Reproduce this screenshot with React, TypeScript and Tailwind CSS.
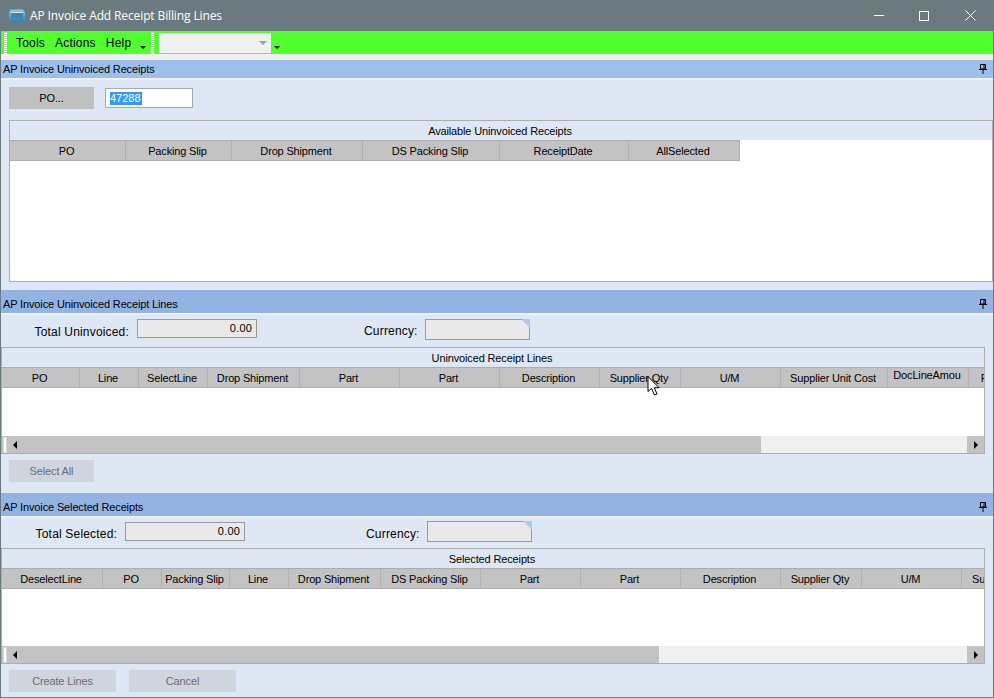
const FONT = "font-['Liberation_Sans',Arial,sans-serif]";

function Pin() {
  return (
    <svg width="8" height="10" viewBox="0 0 8 10" className="block">
      <path d="M1.5 0.5H6.5V5H1.5Z" fill="none" stroke="#000" />
      <path d="M5 0.5V5M0 5.5H8M4 6V10" fill="none" stroke="#000" />
    </svg>
  );
}

function SectionHeader({ title, tall }: { title: string; tall?: boolean }) {
  return (
    <div className={`flex shrink-0 items-center justify-between pl-[2px] pr-[6px] text-[11px] tracking-[-0.14px] text-black ${tall ? "h-[23px] bg-[#93b4e2] pt-[5px]" : "h-[18px] bg-[#9dc0ea]"}`}>
      <span>{title}</span>
      <Pin />
    </div>
  );
}

function Grip() {
  return <div className="h-[22px] w-[3px] self-end bg-[repeating-linear-gradient(to_bottom,#c8c8c8_0,#c8c8c8_1px,#ffffff_1px,#ffffff_2px)]" />;
}

function Caret() {
  return <div className="mt-[9px] h-0 w-0 border-x-[3px] border-t-[3px] border-x-transparent border-t-black" />;
}

type Col = { label: string; width: number; raised?: boolean };

function HeaderRow({ cols }: { cols: Col[] }) {
  return (
    <div className="flex h-[21px] overflow-hidden border-y border-[#adadad] bg-[#c3c3c3]">
      {cols.map((c, i) => (
        <div
          key={i}
          style={{ width: c.width }}
          className={`flex shrink-0 justify-center whitespace-nowrap border-r border-[#b0b0b0] pr-[2px] text-[11px] tracking-[-0.16px] text-black ${c.raised ? "items-start pt-[1px] leading-[13px]" : "items-center pt-[2px]"}`}
        >
          {c.label}
        </div>
      ))}
    </div>
  );
}

function Caption({ label }: { label: string }) {
  return (
    <div className="flex h-[19px] shrink-0 items-center justify-center bg-[#dee8f4] pr-[2px] pt-[1px] text-[11px] tracking-[-0.14px]">
      {label}
    </div>
  );
}

function ScrollBar({ thumb }: { thumb: number }) {
  return (
    <div className="flex h-[18px] border-b border-[#adadad] bg-[#f0f0f0]">
      <div style={{ width: thumb }} className="flex items-center gap-[6px] bg-[#c3c3c3] pl-[1px]">
        <div className="h-[16px] w-[4px] border border-[#d8d8d8] bg-white" />
        <div className="h-0 w-0 border-y-[4px] border-r-[4px] border-y-transparent border-r-black" />
      </div>
      <div className="flex-1" />
      <div className="flex w-[17px] items-center justify-center bg-[#c3c3c3]">
        <div className="h-0 w-0 border-y-[4px] border-l-[4px] border-y-transparent border-l-black" />
      </div>
    </div>
  );
}

function ReadOnlyField({ value }: { value: string }) {
  return (
    <div className="flex h-[19px] w-[120px] items-center justify-end border border-[#9a9a9a] bg-[#e9e9e9] pr-[4px] text-[11px] leading-[15px]">
      {value}
    </div>
  );
}

function CurrencyField() {
  return (
    <div className="relative h-[21px] w-[105px] border border-[#9a9a9a] bg-[#e9e9e9]">
      <div className="absolute -right-px -top-px h-0 w-0 border-l-[9px] border-t-[9px] border-l-transparent border-t-[#b4c8e2]" />
    </div>
  );
}

function GreyButton({ label, width, disabled }: { label: string; width: string; disabled?: boolean }) {
  return (
    <div className={`flex h-[22px] items-center justify-center text-[11px] tracking-[-0.14px] ${width} ${disabled ? "bg-[#ced5dd] text-[#6d6d6d]" : "bg-[#c0c0c0] text-black"}`}>
      {label}
    </div>
  );
}

const receiptCols: Col[] = [
  { label: "PO", width: 116 },
  { label: "Packing Slip", width: 106 },
  { label: "Drop Shipment", width: 131 },
  { label: "DS Packing Slip", width: 137 },
  { label: "ReceiptDate", width: 129 },
  { label: "AllSelected", width: 111 },
];

const lineCols: Col[] = [
  { label: "PO", width: 78 },
  { label: "Line", width: 59 },
  { label: "SelectLine", width: 69 },
  { label: "Drop Shipment", width: 92 },
  { label: "Part", width: 100 },
  { label: "Part", width: 100 },
  { label: "Description", width: 100 },
  { label: "Supplier Qty", width: 81 },
  { label: "U/M", width: 100 },
  { label: "Supplier Unit Cost", width: 107 },
  { label: "DocLineAmou", width: 81, raised: true },
  { label: "Part", width: 46 },
];

const selectedCols: Col[] = [
  { label: "DeselectLine", width: 101 },
  { label: "PO", width: 59 },
  { label: "Packing Slip", width: 68 },
  { label: "Line", width: 59 },
  { label: "Drop Shipment", width: 92 },
  { label: "DS Packing Slip", width: 100 },
  { label: "Part", width: 100 },
  { label: "Part", width: 100 },
  { label: "Description", width: 100 },
  { label: "Supplier Qty", width: 81 },
  { label: "U/M", width: 100 },
  { label: "Supplier Unit Cost", width: 109 },
];

export default function App() {
  return (
    <div className={`relative flex h-[698px] w-[994px] flex-col overflow-hidden border-x border-b border-[#6a7a7e] bg-[#f0f0f0] ${FONT}`}>
      {/* title bar */}
      <div className="flex h-[31px] shrink-0 items-center bg-[#6a7a7e] text-white">
        <svg width="16" height="13" viewBox="0 0 16 13" className="ml-[8px] mr-[5px] shrink-0">
          <defs>
            <linearGradient id="barrel" x1="0" y1="0" x2="0" y2="1">
              <stop offset="0" stopColor="#7fd0f5" />
              <stop offset="1" stopColor="#1b86d2" />
            </linearGradient>
          </defs>
          <path d="M2 0.5H14L16 3V10L14 12.5H2L0 10V3Z" fill="url(#barrel)" />
          <rect x="2" y="3.5" width="12" height="6" fill="#4f7f9e" />
          <rect x="2" y="3" width="12" height="1" fill="#d5f0fc" />
        </svg>
        <span className="font-['Open_Sans',sans-serif] text-[12px] tracking-[-0.12px]">AP Invoice Add Receipt Billing Lines</span>
        <div className="ml-auto flex items-center">
          <div className="flex w-[46px] justify-center pl-[2px]">
            <svg width="10" height="1" viewBox="0 0 10 1"><path d="M0 0.5H10" stroke="#fff" /></svg>
          </div>
          <div className="flex w-[46px] justify-center">
            <svg width="10" height="10" viewBox="0 0 10 10"><rect x="0.5" y="0.5" width="9" height="9" fill="none" stroke="#fff" /></svg>
          </div>
          <div className="flex w-[46px] justify-center">
            <svg width="11" height="11" viewBox="0 0 11 11"><path d="M0.5 0.5L10.5 10.5M10.5 0.5L0.5 10.5" stroke="#fff" /></svg>
          </div>
        </div>
      </div>

      {/* toolbar */}
      <div className="flex h-[23px] shrink-0 items-center bg-[#52ff2e] pl-[3px]">
        <Grip />
        <div className="ml-[9px] flex gap-[10px] text-[12px] tracking-[0.2px] text-black">
          <span>Tools</span>
          <span>Actions</span>
          <span>Help</span>
        </div>
        <div className="ml-[9px]"><Caret /></div>
        <div className="ml-[5px] flex h-full items-end"><Grip /></div>
        <div className="ml-[5px] flex h-[20px] w-[112px] items-center justify-end bg-[#f0f0f0] pr-[4px]">
          <div className="h-0 w-0 border-x-[4px] border-t-[4px] border-x-transparent border-t-[#a0a0a0]" />
        </div>
        <div className="ml-[3px]"><Caret /></div>
      </div>

      <div className="h-[6px] shrink-0" />

      {/* uninvoiced receipts */}
      <SectionHeader title="AP Invoice Uninvoiced Receipts" />
      <div className="mt-[2px] flex h-[210px] shrink-0 flex-col bg-[#dee8f4] pl-[8px]">
        <div className="mt-[7px] flex items-center gap-[11px]">
          <GreyButton label="PO..." width="w-[85px]" />
          <div className="flex h-[20px] w-[88px] items-center border border-[#a9a9a9] bg-white pl-[4px] text-[11px]">
            <span className="bg-[#3399ff] leading-[13px] text-white">47288</span>
            <span className="h-[13px] w-px bg-[#c86400]" />
          </div>
        </div>
        <div className="mt-[11px] flex h-[162px] flex-col border border-[#adadad] bg-white">
          <Caption label="Available Uninvoiced Receipts" />
          <div className="w-[730px]">
            <HeaderRow cols={receiptCols} />
          </div>
        </div>
      </div>

      {/* uninvoiced receipt lines */}
      <SectionHeader title="AP Invoice Uninvoiced Receipt Lines" tall />
      <div className="mt-[2px] flex h-[178px] shrink-0 flex-col bg-[#dee8f4]">
        <div className="flex h-[32px] items-start pt-[4px] text-[12px] leading-[16px] tracking-[0.18px]">
          <span className="mt-[5px] w-[128px] text-right">Total Uninvoiced:</span>
          <div className="ml-[8px]"><ReadOnlyField value="0.00" /></div>
          <span className="ml-[107px] mt-[4px] w-[53px]">Currency:</span>
          <div className="ml-[8px]"><CurrencyField /></div>
        </div>
        <div className="w-[984px] border-x border-t border-[#adadad] bg-white">
          <Caption label="Uninvoiced Receipt Lines" />
          <HeaderRow cols={lineCols} />
          <div className="h-[48px]" />
          <ScrollBar thumb={759} />
        </div>
        <div className="ml-[8px] mt-[6px]"><GreyButton label="Select All" width="w-[85px]" disabled /></div>
      </div>

      {/* selected receipts */}
      <SectionHeader title="AP Invoice Selected Receipts" tall />
      <div className="mt-[2px] flex flex-1 flex-col bg-[#dee8f4]">
        <div className="flex h-[30px] items-start pt-[3px] text-[12px] leading-[16px] tracking-[0.18px]">
          <span className="mt-[5px] w-[116px] text-right">Total Selected:</span>
          <div className="ml-[8px] mt-[1px]"><ReadOnlyField value="0.00" /></div>
          <span className="ml-[121px] mt-[5px] w-[52px]">Currency:</span>
          <div className="ml-[9px]"><CurrencyField /></div>
        </div>
        <div className="w-[984px] border-x border-t border-[#adadad] bg-white">
          <Caption label="Selected Receipts" />
          <HeaderRow cols={selectedCols} />
          <div className="h-[57px]" />
          <ScrollBar thumb={657} />
        </div>
        <div className="ml-[8px] mt-[6px] flex gap-[13px]">
          <GreyButton label="Create Lines" width="w-[107px]" disabled />
          <GreyButton label="Cancel" width="w-[107px]" disabled />
        </div>
      </div>

      {/* mouse pointer */}
      <svg width="14" height="20" viewBox="0 0 14 20" className="absolute left-[646px] top-[376px]">
        <path d="M1 0.5V15.5L4.5 12.5L7.5 19L10 18L7.3 11.7H12L1 0.5Z" fill="#fff" stroke="#000" strokeWidth="1" />
      </svg>
    </div>
  );
}
